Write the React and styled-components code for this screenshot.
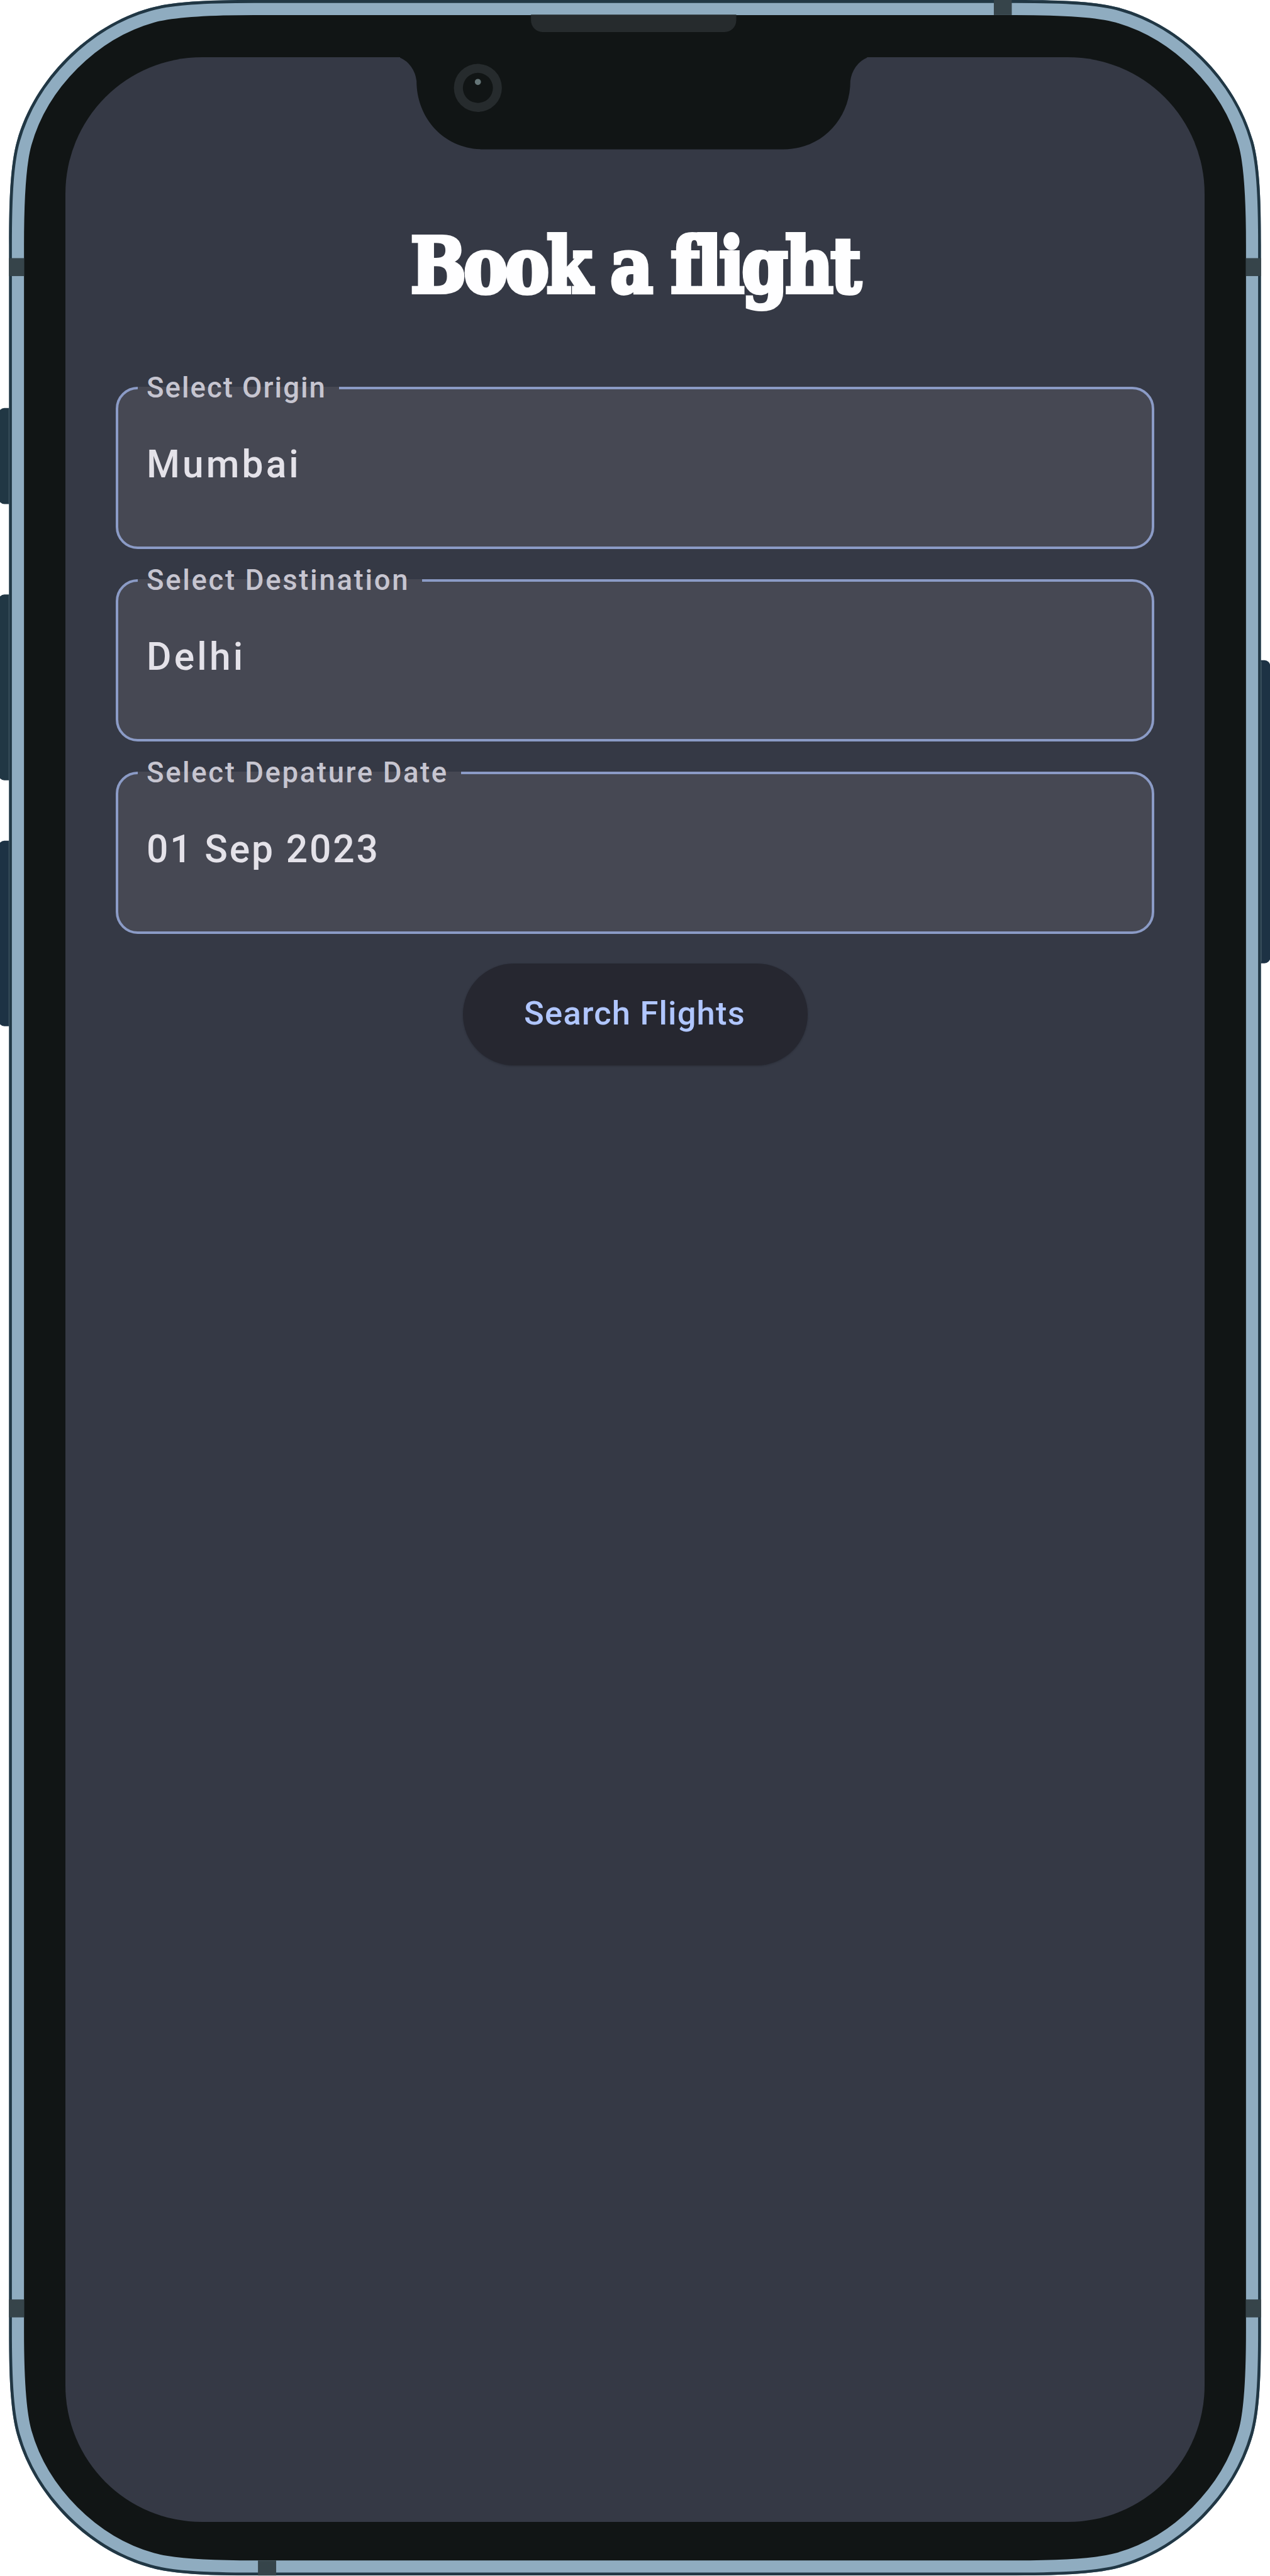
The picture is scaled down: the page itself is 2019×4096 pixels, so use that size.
import React from 'react';
import styled, { createGlobalStyle } from 'styled-components';

const GlobalStyle = createGlobalStyle`
  *, *::before, *::after { box-sizing: border-box; }
  body { margin: 0; background: #ffffff; font-family: Roboto, "Noto Sans", sans-serif; }
`;

const Device = styled.main`
  position: relative;
  width: 2019px;
  height: 4096px;
  padding: 91px 104px 0;
  overflow: hidden;
`;

const Artwork = styled.svg`
  position: absolute;
  inset: 0;
  width: 100%;
  height: 100%;
  pointer-events: none;
`;

const Screen = styled.section`
  position: relative;
  display: flex;
  flex-direction: column;
  align-items: center;
  width: 1811px;
  height: 3919px;
  padding: 262px 80px 0;
  border-radius: 217px;
  background: #353945;
`;

const Title = styled.h1`
  margin: 0 0 97px;
  font: 700 121px/140px "DejaVu Serif Condensed", "DejaVu Serif", serif;
  font-stretch: condensed;
  letter-spacing: -4px;
  white-space: nowrap;
  color: #fefeff;
  -webkit-text-stroke: 6px #fefeff;
  transform: scaleX(0.96);
`;

const Form = styled.form`
  display: flex;
  flex-direction: column;
  align-items: center;
  width: 100%;
`;

const Fields = styled.div`
  display: flex;
  flex-direction: column;
  gap: 23px;
  width: 100%;
  margin-bottom: 47px;
`;

const Field = styled.fieldset`
  height: 283px;
  min-width: 0;
  margin: 0;
  padding: 0;
  border: 4px solid #8b9bc6;
  border-radius: 35px;
  background: #464853;
`;

const FieldLabel = styled.legend`
  height: 54px;
  margin-left: 31px;
  padding: 0 20px 0 14px;
  font-size: 45.5px;
  font-weight: 500;
  line-height: 53px;
  letter-spacing: ${({ $tracking }) => $tracking}px;
  white-space: nowrap;
  color: #c6c5d0;
`;

const FieldValue = styled.div`
  padding: 55px 45px 0;
  font-size: 60.5px;
  font-weight: 500;
  line-height: 80px;
  letter-spacing: ${({ $tracking }) => $tracking}px;
  color: #e4e2e9;
`;

const SearchButton = styled.button`
  display: flex;
  align-items: center;
  justify-content: center;
  width: 548px;
  height: 162px;
  padding: 0 1px 4px 0;
  border: 0;
  border-radius: 81px;
  background: #262730;
  box-shadow: 0 1px 3px rgba(20, 22, 30, 0.35);
  font: 500 52.5px/60px Roboto, "Noto Sans", sans-serif;
  letter-spacing: 1.2px;
  color: #b0c6ff;
`;

const OUTLINE =
  'M0 505 C0 400 4.3 334 16.5 291 C52.5 163 163 52.5 291 16.5 C334 4.3 400 0 505 0 ' +
  'H2077 C2182 0 2248 4.3 2291 16.5 C2419 52.5 2529.5 163 2565.5 291 C2577.7 334 2582 400 2582 505 ' +
  'V4807 C2582 4912 2577.7 4978 2565.5 5021 C2529.5 5149 2419 5259.5 2291 5295.5 C2248 5307.7 2182 5312 2077 5312 ' +
  'H505 C400 5312 334 5307.7 291 5295.5 C163 5259.5 52.5 5149 16.5 5021 C4.3 4978 0 4912 0 4807 Z';

const BANDS = [
  [2049.5, 0, 37, 31],
  [532, 5281, 37.5, 31],
  [18.5, 532.4, 31, 37],
  [2569.5, 532.4, 31, 37],
  [18.5, 4742.6, 31, 37],
  [2569.5, 4742.6, 31, 37],
];

const KEYS = [
  [-3, 841.6, 40, 198, '#213744'],
  [-3, 1226, 40, 383.4, '#213744'],
  [-3, 1734, 40, 382.5, '#1d3244'],
  [2580, 1361.8, 39.5, 625, '#1d3244'],
];

const SEAMS = [
  [18, 841.6, 198],
  [18, 1226, 383.4],
  [18, 1734, 382.5],
  [2600, 1365, 618],
];

function Chassis() {
  return (
    <Artwork viewBox="0 0 2619 5313" preserveAspectRatio="none" aria-hidden="true">
      <defs>
        <clipPath id="body">
          <path d={OUTLINE} />
        </clipPath>
      </defs>
      {KEYS.map(([x, y, w, h, fill]) => (
        <rect key={y} x={x} y={y} width={w} height={h} rx="12" fill={fill} />
      ))}
      {SEAMS.map(([x, y, h]) => (
        <rect key={y} x={x} y={y} width="1.2" height={h} fill="#6a7b82" />
      ))}
      <g transform="translate(18.5 0)">
        <g clipPath="url(#body)" fill="none">
          <path d={OUTLINE} fill="#111515" stroke="#8facc0" strokeWidth="62" />
          <path d={OUTLINE} stroke="#213744" strokeWidth="12" />
        </g>
      </g>
      {BANDS.map(([x, y, w, h]) => (
        <rect key={`${x}-${y}`} x={x} y={y} width={w} height={h} fill="#36444a" />
      ))}
    </Artwork>
  );
}

function Notch() {
  return (
    <Artwork viewBox="0 0 2619 5313" preserveAspectRatio="none" aria-hidden="true">
      <path
        fill="#111515"
        d="M825 119 V110 H1788 V119 A52.3 60 0 0 0 1753.6 167 C1753.6 245 1695 308 1616 308 H997 C917 308 859 245 859 167 A52.3 60 0 0 0 825 119 Z"
      />
      <path fill="#262b2d" d="M1095 30 H1518.3 V42 A24 24 0 0 1 1494.3 66 H1119 A24 24 0 0 1 1095 42 Z" />
      <circle cx="985.5" cy="181.3" r="49.5" fill="#262b2d" />
      <circle cx="985.5" cy="181.3" r="31" fill="#111515" />
      <circle cx="985.5" cy="169" r="6.3" fill="#657577" />
    </Artwork>
  );
}

const FIELDS = [
  { label: 'Select Origin', labelTracking: 2, value: 'Mumbai', valueTracking: 4.1 },
  { label: 'Select Destination', labelTracking: 2.67, value: 'Delhi', valueTracking: 4.2 },
  { label: 'Select Depature Date', labelTracking: 2.6, value: '01 Sep 2023', valueTracking: 2.85 },
];

export default function App() {
  return (
    <>
      <GlobalStyle />
      <Device>
        <Chassis />
        <Screen>
          <Title>Book a flight</Title>
          <Form>
            <Fields>
              {FIELDS.map((field) => (
                <Field key={field.label}>
                  <FieldLabel $tracking={field.labelTracking}>{field.label}</FieldLabel>
                  <FieldValue $tracking={field.valueTracking}>{field.value}</FieldValue>
                </Field>
              ))}
            </Fields>
            <SearchButton type="button">Search Flights</SearchButton>
          </Form>
        </Screen>
        <Notch />
      </Device>
    </>
  );
}
